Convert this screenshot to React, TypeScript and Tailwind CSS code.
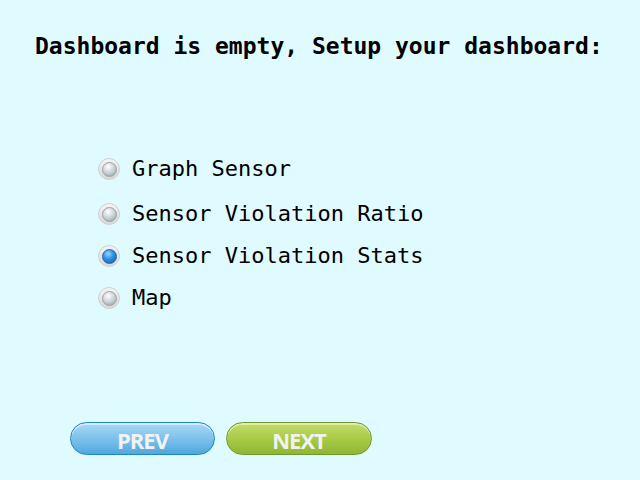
import React, { useState } from 'react';

const OPTIONS = ['Graph Sensor', 'Sensor Violation Ratio', 'Sensor Violation Stats', 'Map'];
const ROW_GAPS = ['mt-0', 'mt-[23px]', 'mt-[20px]', 'mt-[20px]'];

const Radio: React.FC<{ checked: boolean }> = ({ checked }) => (
  <span className="w-[22px] h-[22px] rounded-full bg-gradient-to-b from-[#f4f4f4] to-[#d8d8d8] border border-[#d0d0d0] flex items-center justify-center shrink-0">
    <span
      className={`w-[15px] h-[15px] rounded-full ${
        checked
          ? 'bg-[radial-gradient(circle_at_40%_30%,#9fd4ff_0%,#2a8fe0_45%,#0a5fb0_100%)] border border-[#1a6ab8]'
          : 'bg-[radial-gradient(circle_at_40%_30%,#ffffff_0%,#c6ccd2_55%,#8e979f_100%)] border border-[#9aa2aa]'
      }`}
    />
  </span>
);

export default function App() {
  const [selected, setSelected] = useState(2);

  return (
    <div className="w-[640px] h-[480px] bg-[#e0fbff] flex flex-col font-['DejaVu_Sans_Mono',monospace] text-black">
      <h1 className="pt-[33px] pl-[35px] text-[23px] leading-[27px] font-bold whitespace-nowrap">
        Dashboard is empty, Setup your dashboard:
      </h1>

      <div className="mt-[98px] pl-[98px] flex flex-col">
        {OPTIONS.map((opt, idx) => (
          <button
            key={opt}
            onClick={() => setSelected(idx)}
            className={`flex items-center gap-[12px] text-left text-[22px] leading-[22px] ${ROW_GAPS[idx]}`}
          >
            <Radio checked={selected === idx} />
            <span>{opt}</span>
          </button>
        ))}
      </div>

      <div className="mt-auto mb-[25px] pl-[70px] flex gap-[11px]">
        <button className="w-[145px] h-[33px] pt-[2px] rounded-full border border-[#1f86c4] bg-gradient-to-b from-[#a9d8f5] via-[#7ec1ec] to-[#4fa7de] text-[#f2f2f2] font-['Open_Sans',sans-serif] font-bold text-[22px] leading-none tracking-[-1px] shadow-[inset_0_2px_0_rgba(255,255,255,0.5)]">
          PREV
        </button>
        <button className="w-[146px] h-[33px] pt-[2px] rounded-full border border-[#6f9a2a] bg-gradient-to-b from-[#c4dc6a] via-[#a9cb45] to-[#8db735] text-[#f2f2f2] font-['Open_Sans',sans-serif] font-bold text-[22px] leading-none tracking-[-1px] shadow-[inset_0_2px_0_rgba(255,255,255,0.45)]">
          NEXT
        </button>
      </div>
    </div>
  );
}
